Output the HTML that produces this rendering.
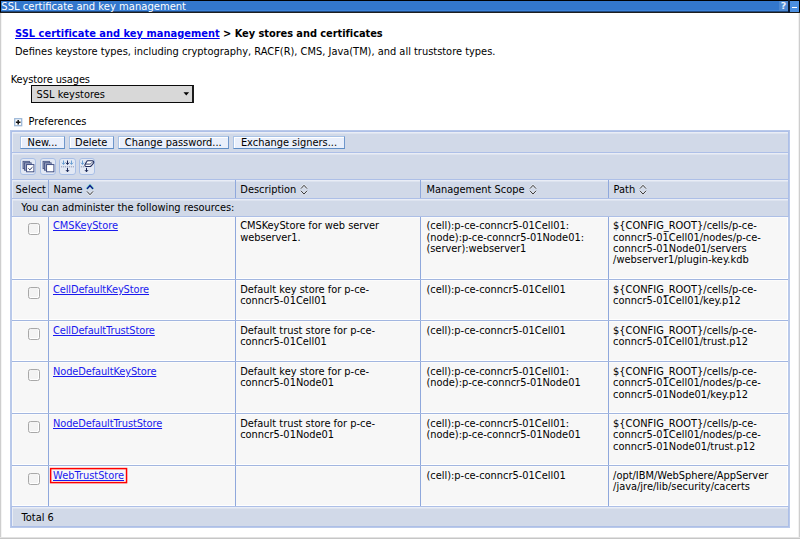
<!DOCTYPE html>
<html><head><meta charset="utf-8"><title>SSL certificate and key management</title>
<style>
html,body{margin:0;padding:0;background:#fff;}
body{width:800px;height:539px;position:relative;overflow:hidden;font-family:"DejaVu Sans","Liberation Sans",sans-serif;font-size:9.85px;line-height:11.35px;color:#000;}
.abs{position:absolute;}
a{color:#1a1aee;text-decoration:underline;}
#tbar{left:0;top:0;width:800px;height:13px;background:linear-gradient(#000 0,#000 12px,#1e1e1e 12px,#1e1e1e 13px);}
#tbar .fill{left:1px;top:1px;width:798px;height:11px;background:linear-gradient(#3377cc 0,#3377cc 9px,#3d83da 9px,#3d83da 10px,#20497e 10px,#20497e 11px);}
#tbar .t{left:1.3px;top:0.2px;color:#fff;white-space:nowrap;font-size:10px;line-height:13px;}
.nw{white-space:nowrap;}
/* table */
#grid{left:10px;top:130px;width:780px;height:398px;background:#b9c9ea;}
.band{left:2px;width:776px;background:#d1d9e8;box-shadow:inset 1px 1px 0 #e9edf6,inset 0 2px 0 #dde3ef,0 0 0 1px #adbfe7;}
.hl{left:2px;width:776px;height:1px;background:#7c99d6;}
.l2{background:#a2b6e0;}
.row{left:2px;width:776px;background:#f7f7f7;box-shadow:inset 1px 1px 0 #fcfcfc,inset -1px -1px 0 #fff;}
.vl{top:0;width:1px;height:100%;background:#8fa8dc;}
.cell{top:0;}
.btn{top:4px;height:11px;border:1px solid;border-color:#a9c3e6 #6f97cc #5d8cc4 #a9c3e6;background:#e9effb;box-shadow:inset 1px 1px 0 #fff;text-align:center;line-height:11px;white-space:nowrap;}
.ib{top:5.3px;width:14.2px;height:14.4px;border:1px solid #a9bfe6;border-radius:3px;background:#e2e8f4;}
.cb{left:15.8px;width:10px;height:10px;border:1px solid #a8a8a8;border-radius:2.5px;background:#f3f3f3;box-shadow:inset -1px -1px 0 #fff;}
</style></head><body>
<div id="tbar" class="abs"><div class="fill abs"></div><div class="t abs">SSL certificate and key management</div>
<div class="abs" style="left:779px;top:1px;width:9px;height:10px;background:#4c88d2;color:#e8eef8;font-size:9.5px;font-weight:bold;line-height:10px;text-align:center;">?</div>
<div class="abs" style="left:788px;top:0;width:2px;height:13px;background:#0a1a33;"></div>
<div class="abs" style="left:790px;top:1px;width:9px;height:11px;background:#4b8fe0;"></div>
<div class="abs" style="left:792px;top:7px;width:5px;height:1px;background:#fff;"></div>
</div>
<div class="abs" style="left:0;top:13px;width:2px;height:526px;background:linear-gradient(90deg,#cecece 0,#cecece 1px,#f4f4f4 1px,#f4f4f4 2px);"></div>
<div class="abs" style="left:798px;top:13px;width:2px;height:526px;background:linear-gradient(90deg,#f1f1f1 0,#f1f1f1 1px,#cecece 1px,#cecece 2px);"></div>
<div class="abs" style="left:0;top:537px;width:800px;height:2px;background:linear-gradient(#e2e2e2 0,#e2e2e2 1px,#c6c6c6 1px,#c6c6c6 2px);"></div>

<div class="abs nw" style="left:15px;top:27.8px;font-weight:bold;letter-spacing:-0.04px;"><a href="#" style="color:#0000ee;letter-spacing:0.03px">SSL certificate and key management</a> &gt; Key stores and certificates</div>
<div class="abs nw" style="left:15px;top:46.3px;">Defines keystore types, including cryptography, RACF(R), CMS, Java(TM), and all truststore types.</div>
<div class="abs nw" style="left:10.7px;top:74px;letter-spacing:-0.1px;">Keystore usages</div>
<div class="abs" style="left:31px;top:85px;width:160px;height:15.5px;border:1px solid #0a0a0a;border-right:2px solid #1c1c1c;background:#d8d8d8;">
<div class="abs nw" style="left:4.6px;top:2.9px;">SSL keystores</div>
<svg class="abs" style="left:151.2px;top:5.7px" width="7" height="4" viewBox="0 0 7 4"><path d="M0.5 0.3h5.6L3.3 3.4z" fill="#000"/></svg>
</div>
<svg class="abs" style="left:14.2px;top:117.8px" width="9" height="9" viewBox="0 0 9 9"><rect x=".7" y=".7" width="7" height="7" fill="#fff" stroke="#9db8d8" stroke-width="1.3"/><path d="M1.9 4.2H6.5M4.2 1.9V6.5" stroke="#151515" stroke-width="1.5"/></svg>
<div class="abs nw" style="left:28.6px;top:116px;">Preferences</div>

<div id="grid" class="abs">
 <div class="band abs" style="top:2px;height:20px;">
  <div class="btn abs" style="left:8px;width:43px;">New...</div>
  <div class="btn abs" style="left:57px;width:42.5px;">Delete</div>
  <div class="btn abs" style="left:105.6px;width:109.4px;">Change password...</div>
  <div class="btn abs" style="left:221px;width:110px;">Exchange signers...</div>
 </div>
 <div class="hl abs" style="top:22px;"></div>
 <div class="band abs" style="top:23px;height:26px;">
  <div class="ib abs" style="left:8.2px;"><svg width="16" height="16" viewBox="0 0 16 16" class="abs" style="left:-1px;top:-1px"><rect x="3" y="3.3" width="6.6" height="7.4" fill="#97a1c0" stroke="#3c4a7c" stroke-width=".75"/><rect x="4.6" y="4.8" width="6.6" height="7.4" fill="#97a1c0" stroke="#3c4a7c" stroke-width=".75"/><rect x="6.6" y="6.6" width="7.3" height="7.2" fill="#fff" stroke="#34427a" stroke-width=".9"/><path d="M8.5 10.4l1.3 1.4l2.7-2.6" fill="none" stroke="#1d2a5a" stroke-width="1"/></svg></div>
  <div class="ib abs" style="left:27.9px;"><svg width="16" height="16" viewBox="0 0 16 16" class="abs" style="left:-1px;top:-1px"><rect x="3" y="3.3" width="6.6" height="7.4" fill="#97a1c0" stroke="#3c4a7c" stroke-width=".75"/><rect x="4.6" y="4.8" width="6.6" height="7.4" fill="#97a1c0" stroke="#3c4a7c" stroke-width=".75"/><rect x="6.6" y="6.6" width="7.3" height="7.2" fill="#fff" stroke="#34427a" stroke-width=".9"/></svg></div>
  <div class="ib abs" style="left:47.4px;"><svg width="16" height="16" viewBox="0 0 16 16" class="abs" style="left:-1px;top:-1px"><path d="M4.5 2.5v3.9M2.95 4.7l1.55 1.7l1.55-1.7" fill="none" stroke="#5f97cf" stroke-width="0.9"/><path d="M8.5 2.5v3.9M6.95 4.7l1.55 1.7l1.55-1.7" fill="none" stroke="#1a2757" stroke-width="1"/><path d="M12.5 2.5v3.9M10.95 4.7l1.55 1.7l1.55-1.7" fill="none" stroke="#5f97cf" stroke-width="0.9"/><path d="M2 8.8H15" stroke="#8a95b4" stroke-width="1" stroke-dasharray="1.2 0.8"/><path d="M8.5 9.9v3.9M6.95 12.1l1.55 1.7l1.55-1.7" fill="none" stroke="#1a2757" stroke-width="1"/></svg></div>
  <div class="ib abs" style="left:67.2px;"><svg width="16" height="16" viewBox="0 0 16 16" class="abs" style="left:-1px;top:-1px"><path d="M3.5 2.5v3.9M1.95 4.7l1.55 1.7l1.55-1.7" fill="none" stroke="#5f97cf" stroke-width="0.9"/><path d="M1.8 8.8H6" stroke="#8a95b4" stroke-width="1" stroke-dasharray="1.2 0.8"/><path d="M8.8 2.8h4.4a1.5 1.5 0 0 1 1.1 2.6l-2.1 2.4a2 2 0 0 1-1.4.7H7.4a1.4 1.4 0 0 1-1.1-2.4l1.4-2.5A1.5 1.5 0 0 1 8.8 2.8z" fill="#fff" stroke="#1f2c5e" stroke-width="1.05"/><path d="M6.3 6.1h4.5a1.4 1.4 0 0 0 1-.4l2.3-2.3" fill="none" stroke="#1f2c5e" stroke-width=".9"/><path d="M7.5 9.9v3.9M5.95 12.1l1.55 1.7l1.55-1.7" fill="none" stroke="#1a2757" stroke-width="1"/></svg></div>
 </div>
 <div class="hl abs" style="top:49px;"></div>
 <div class="band abs" style="top:50px;height:18px;" id="hdr">
  <div class="abs nw" style="left:3.6px;top:4.4px;">Select</div>
  <div class="abs nw" style="left:41.6px;top:4.4px;">Name</div>
  <div class="abs nw" style="left:228.3px;top:4.4px;">Description</div>
  <div class="abs nw" style="left:414.5px;top:4.4px;">Management Scope</div>
  <div class="abs nw" style="left:601.5px;top:4.4px;">Path</div>
  <svg class="abs" style="left:74.1px;top:3.6px" width="8" height="12" viewBox="0 0 8 12"><path d="M0.7 4.9L4 1.2L7.3 4.9" fill="none" stroke="#6fdcc8" stroke-opacity=".8" stroke-width="2.6"/><path d="M1 4.9L4 1.6L7 4.9" fill="none" stroke="#0c0c88" stroke-width="1.4"/><path d="M1 7.4L4 10.7L7 7.4" fill="none" stroke="#fff" stroke-opacity=".45" stroke-width="2.2"/><path d="M1 7.4L4 10.7L7 7.4" fill="none" stroke="#2a2a2a" stroke-width=".95"/></svg><svg class="abs" style="left:288.1px;top:4.4px" width="8" height="11" viewBox="0 0 8 11"><path d="M1 4.6L4 1.3L7 4.6M1 6.8L4 10.1L7 6.8" fill="none" stroke="#fff" stroke-opacity=".45" stroke-width="2.2"/><path d="M1 4.6L4 1.3L7 4.6M1 6.8L4 10.1L7 6.8" fill="none" stroke="#2a2a2a" stroke-width=".95"/></svg><svg class="abs" style="left:516.5px;top:4.4px" width="8" height="11" viewBox="0 0 8 11"><path d="M1 4.6L4 1.3L7 4.6M1 6.8L4 10.1L7 6.8" fill="none" stroke="#fff" stroke-opacity=".45" stroke-width="2.2"/><path d="M1 4.6L4 1.3L7 4.6M1 6.8L4 10.1L7 6.8" fill="none" stroke="#2a2a2a" stroke-width=".95"/></svg><svg class="abs" style="left:627px;top:4.4px" width="8" height="11" viewBox="0 0 8 11"><path d="M1 4.6L4 1.3L7 4.6M1 6.8L4 10.1L7 6.8" fill="none" stroke="#fff" stroke-opacity=".45" stroke-width="2.2"/><path d="M1 4.6L4 1.3L7 4.6M1 6.8L4 10.1L7 6.8" fill="none" stroke="#2a2a2a" stroke-width=".95"/></svg>
  <div class="vl abs" style="left:36px"></div><div class="vl abs" style="left:223px"></div><div class="vl abs" style="left:408px"></div><div class="vl abs" style="left:596px"></div>
 </div>
 <div class="hl l2 abs" style="top:68px;background:#a4b8e4"></div>
 <div class="band abs" style="top:69px;height:16.5px;"><div class="abs nw" style="left:9.3px;top:2.5px;letter-spacing:-0.03px;">You can administer the following resources:</div></div>
 <div class="hl l2 abs" style="top:85.5px;background:#adbfe6"></div>
<!--ROWS-->
 <div class="row abs" style="top:86.50px;height:62.50px;">
  <div class="cb abs" style="top:6.6px;"></div>
  <div class="abs nw" style="left:41px;top:3.8px;"><a href="#" style="letter-spacing:-0.05px">CMSKeyStore</a></div>
  <div class="abs nw" style="left:228.2px;top:3.8px;letter-spacing:-0.04px;">CMSKeyStore for web server<br>webserver1.</div>
  <div class="abs nw" style="left:414.4px;top:3.8px;">(cell):p-ce-conncr5-01Cell01:<br>(node):p-ce-conncr5-01Node01:<br>(server):webserver1</div>
  <div class="abs nw" style="left:601.1px;top:3.8px;">${CONFIG_ROOT}/cells/p-ce-<br>conncr5-01Cell01/nodes/p-ce-<br>conncr5-01Node01/servers<br>/webserver1/plugin-key.kdb</div>
  <div class="vl abs" style="left:36px"></div><div class="vl abs" style="left:223px"></div><div class="vl abs" style="left:408px"></div><div class="vl abs" style="left:596px"></div>
 </div>
 <div class="hl l2 abs" style="top:149.00px;"></div>
 <div class="row abs" style="top:150.00px;height:40.25px;">
  <div class="cb abs" style="top:6.6px;"></div>
  <div class="abs nw" style="left:41px;top:3.8px;"><a href="#" style="letter-spacing:-0.115px">CellDefaultKeyStore</a></div>
  <div class="abs nw" style="left:228.2px;top:3.8px;">Default key store for p-ce-<br>conncr5-01Cell01</div>
  <div class="abs nw" style="left:414.4px;top:3.8px;">(cell):p-ce-conncr5-01Cell01</div>
  <div class="abs nw" style="left:601.1px;top:3.8px;">${CONFIG_ROOT}/cells/p-ce-<br>conncr5-01Cell01/key.p12</div>
  <div class="vl abs" style="left:36px"></div><div class="vl abs" style="left:223px"></div><div class="vl abs" style="left:408px"></div><div class="vl abs" style="left:596px"></div>
 </div>
 <div class="hl l2 abs" style="top:190.25px;"></div>
 <div class="row abs" style="top:191.25px;height:39.95px;">
  <div class="cb abs" style="top:6.6px;"></div>
  <div class="abs nw" style="left:41px;top:3.8px;"><a href="#" style="letter-spacing:-0.115px">CellDefaultTrustStore</a></div>
  <div class="abs nw" style="left:228.2px;top:3.8px;">Default trust store for p-ce-<br>conncr5-01Cell01</div>
  <div class="abs nw" style="left:414.4px;top:3.8px;">(cell):p-ce-conncr5-01Cell01</div>
  <div class="abs nw" style="left:601.1px;top:3.8px;">${CONFIG_ROOT}/cells/p-ce-<br>conncr5-01Cell01/trust.p12</div>
  <div class="vl abs" style="left:36px"></div><div class="vl abs" style="left:223px"></div><div class="vl abs" style="left:408px"></div><div class="vl abs" style="left:596px"></div>
 </div>
 <div class="hl l2 abs" style="top:231.20px;"></div>
 <div class="row abs" style="top:232.20px;height:51.05px;">
  <div class="cb abs" style="top:6.6px;"></div>
  <div class="abs nw" style="left:41px;top:3.8px;"><a href="#" style="letter-spacing:-0.115px">NodeDefaultKeyStore</a></div>
  <div class="abs nw" style="left:228.2px;top:3.8px;">Default key store for p-ce-<br>conncr5-01Node01</div>
  <div class="abs nw" style="left:414.4px;top:3.8px;">(cell):p-ce-conncr5-01Cell01:<br>(node):p-ce-conncr5-01Node01</div>
  <div class="abs nw" style="left:601.1px;top:3.8px;">${CONFIG_ROOT}/cells/p-ce-<br>conncr5-01Cell01/nodes/p-ce-<br>conncr5-01Node01/key.p12</div>
  <div class="vl abs" style="left:36px"></div><div class="vl abs" style="left:223px"></div><div class="vl abs" style="left:408px"></div><div class="vl abs" style="left:596px"></div>
 </div>
 <div class="hl l2 abs" style="top:283.25px;"></div>
 <div class="row abs" style="top:284.25px;height:50.75px;">
  <div class="cb abs" style="top:6.6px;"></div>
  <div class="abs nw" style="left:41px;top:3.8px;"><a href="#" style="letter-spacing:-0.115px">NodeDefaultTrustStore</a></div>
  <div class="abs nw" style="left:228.2px;top:3.8px;">Default trust store for p-ce-<br>conncr5-01Node01</div>
  <div class="abs nw" style="left:414.4px;top:3.8px;">(cell):p-ce-conncr5-01Cell01:<br>(node):p-ce-conncr5-01Node01</div>
  <div class="abs nw" style="left:601.1px;top:3.8px;">${CONFIG_ROOT}/cells/p-ce-<br>conncr5-01Cell01/nodes/p-ce-<br>conncr5-01Node01/trust.p12</div>
  <div class="vl abs" style="left:36px"></div><div class="vl abs" style="left:223px"></div><div class="vl abs" style="left:408px"></div><div class="vl abs" style="left:596px"></div>
 </div>
 <div class="hl l2 abs" style="top:335.00px;"></div>
 <div class="row abs" style="top:336.00px;height:40.25px;">
  <div class="cb abs" style="top:6.6px;"></div>
  <svg class="abs" style="left:37px;top:1px" width="80" height="17" viewBox="0 0 80 17"><rect x="1.65" y="1.6" width="75.9" height="14" fill="none" stroke="#ff0000" stroke-width="1.5"/></svg>
  <div class="abs nw" style="left:41px;top:3.8px;"><a href="#" style="letter-spacing:-0.02px">WebTrustStore</a></div>
  <div class="abs nw" style="left:414.4px;top:3.8px;">(cell):p-ce-conncr5-01Cell01</div>
  <div class="abs nw" style="left:601.1px;top:3.8px;">/opt/IBM/WebSphere/AppServer<br>/java/jre/lib/security/cacerts</div>
  <div class="vl abs" style="left:36px"></div><div class="vl abs" style="left:223px"></div><div class="vl abs" style="left:408px"></div><div class="vl abs" style="left:596px"></div>
 </div>
 <div class="hl abs" style="top:376.25px;"></div>
 <div class="band abs" style="top:377.25px;height:19px;"><div class="abs nw" style="left:9.5px;top:5px;">Total 6</div></div>
<!--/ROWS-->
</div>
</body></html>
